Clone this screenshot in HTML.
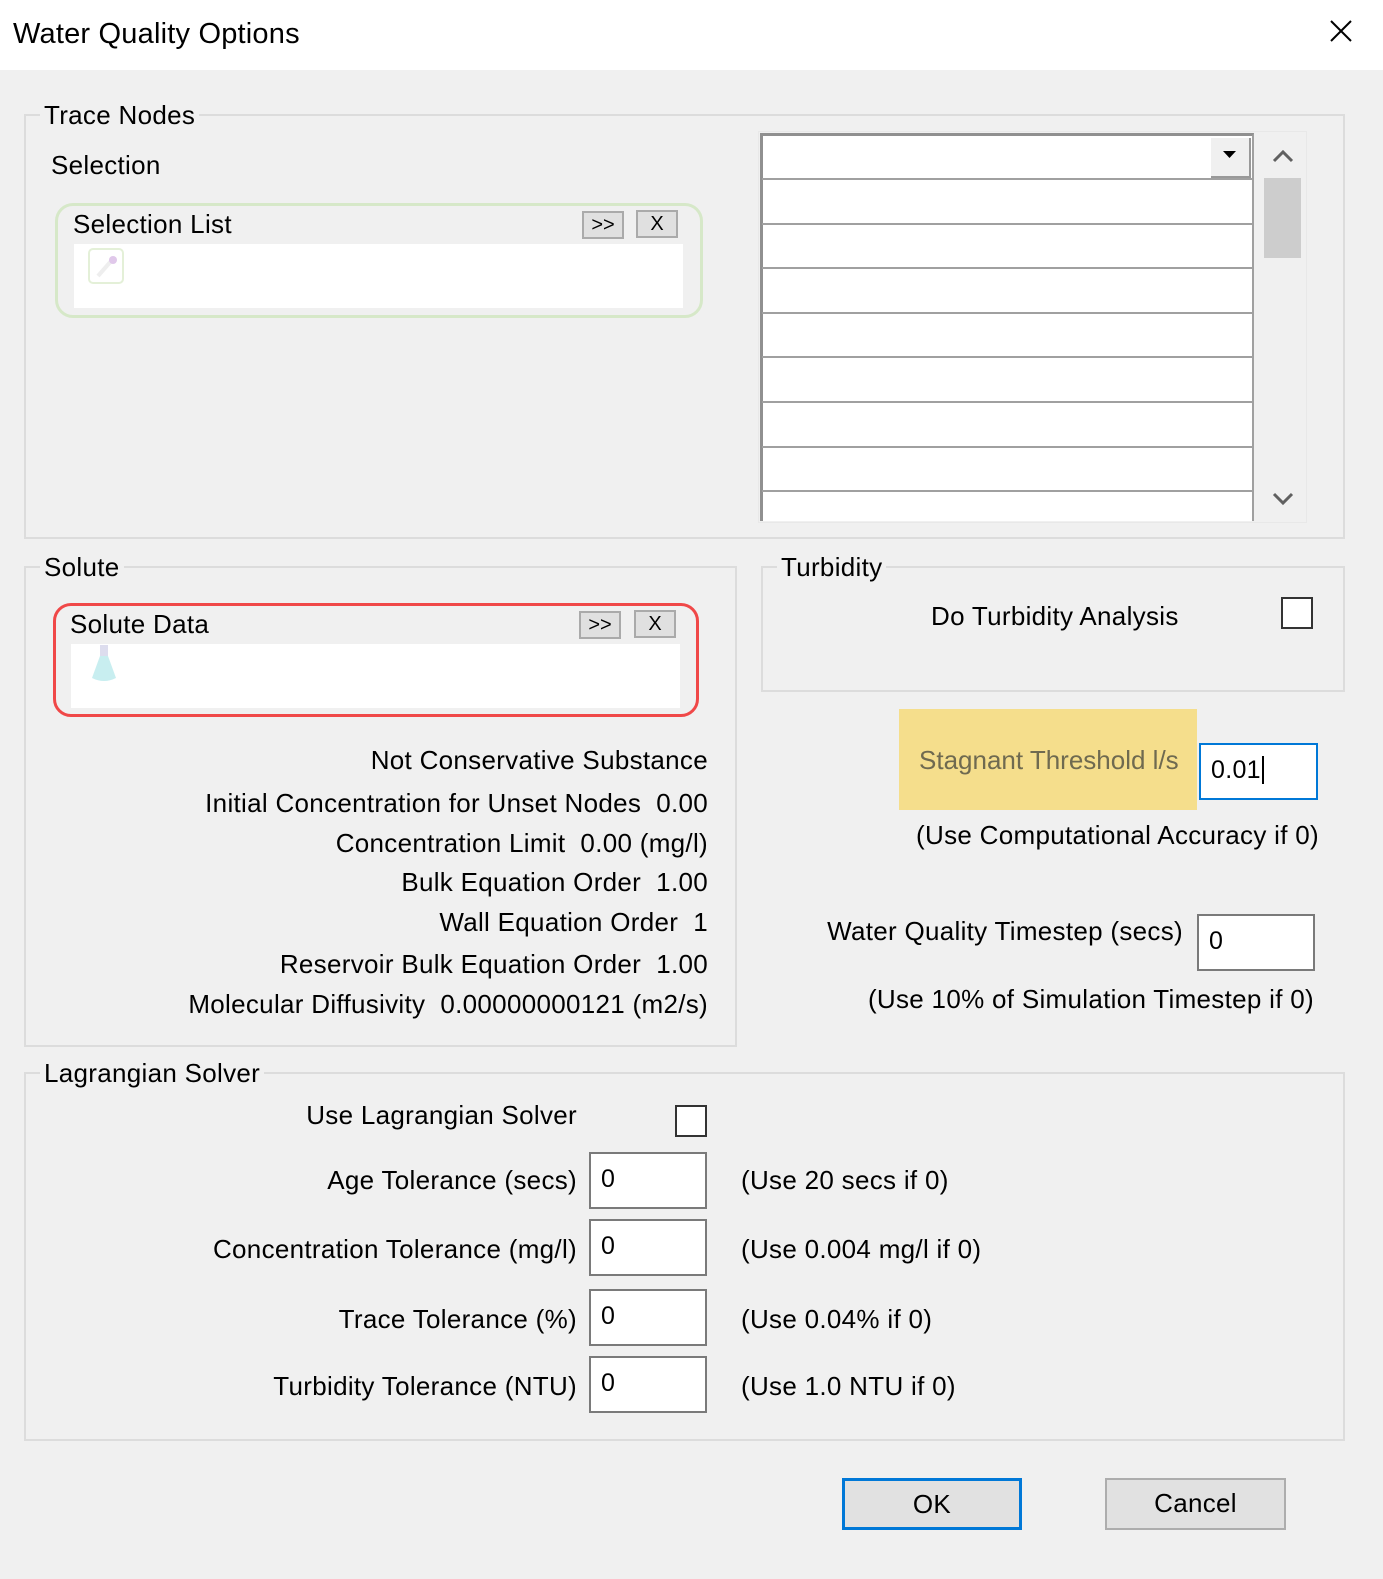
<!DOCTYPE html>
<html><head><meta charset="utf-8"><style>
*{box-sizing:border-box;margin:0;padding:0}
body{width:1383px;height:1579px;background:#f0f0f0;font-family:"Liberation Sans",sans-serif;font-size:26px;letter-spacing:0.3px;color:#000;position:relative;overflow:hidden}
.a{position:absolute;white-space:nowrap;line-height:30px;height:30px}
.r{text-align:right}
.g{position:absolute;border:2px solid #dcdcdc}
.gl{position:absolute;background:#f0f0f0;padding:0 4px;line-height:30px;font-size:26px}
.in{position:absolute;background:#fff;border:2px solid #7a7a7a;font-size:25px;padding-left:10px;line-height:50px}
.cb{position:absolute;width:32px;height:32px;background:#fff;border:2px solid #333}
.btn{position:absolute;background:#e1e1e1;border:2px solid #adadad;text-align:center;font-size:26px;line-height:46px}
.sb{position:absolute;width:42px;height:28px;background:#e0e0e0;border:2px solid #aaa;font-size:20px;line-height:24px;text-align:center;letter-spacing:0}
</style></head><body>
<div style="position:absolute;left:0;top:0;width:1383px;height:70px;background:#fff"></div>
<div class="a" style="left:13px;top:18px;font-size:29px;line-height:32px;height:32px;letter-spacing:0.2px">Water Quality Options</div>
<svg style="position:absolute;left:1329px;top:19px" width="24" height="24"><path d="M2 2L22 22M22 2L2 22" stroke="#000" stroke-width="2"/></svg>

<!-- Trace Nodes -->
<div class="g" style="left:24px;top:114px;width:1321px;height:425px"></div>
<div class="gl" style="left:40px;top:100px">Trace Nodes</div>
<div class="a" style="left:51px;top:150px">Selection</div>
<div style="position:absolute;left:55px;top:203px;width:648px;height:115px;border:3px solid #d6e8c8;border-radius:18px"></div>
<div class="a" style="left:73px;top:209px">Selection List</div>
<div class="sb" style="left:582px;top:211px">&gt;&gt;</div>
<div class="sb" style="left:636px;top:210px">X</div>
<div style="position:absolute;left:74px;top:244px;width:609px;height:64px;background:#fff"></div>
<div style="position:absolute;left:88px;top:248px;width:36px;height:36px;border:2px solid #e4f0d8;border-radius:5px"></div>
<svg style="position:absolute;left:90px;top:250px" width="32" height="32"><path d="M8 26L22 10" stroke="#eee" stroke-width="4"/><circle cx="23" cy="10" r="4" fill="#e0c8ea"/></svg>

<div style="position:absolute;left:758px;top:131px;width:549px;height:392px;background:#f0f0f0;border:1px solid #e8e8e8"></div>
<div style="position:absolute;left:760px;top:133px;width:494px;height:388px;background:#fff;border-left:3px solid #909090;border-top:3px solid #909090;border-right:2px solid #a0a0a0"></div>
<div style="position:absolute;left:1211px;top:138px;width:40px;height:40px;background:#f0f0f0;border-right:2px solid #999;border-bottom:2px solid #999"></div>
<svg style="position:absolute;left:1222px;top:150px" width="16" height="10"><path d="M1 1h13l-6.5 7z" fill="#000"/></svg>
<div style="position:absolute;left:762px;top:178px;width:490px;height:2px;background:#a0a0a0;box-shadow:0 45px #a0a0a0,0 89px #a0a0a0,0 134px #a0a0a0,0 178px #a0a0a0,0 223px #a0a0a0,0 268px #a0a0a0,0 312px #a0a0a0"></div>
<div style="position:absolute;left:1264px;top:178px;width:37px;height:80px;background:#cdcdcd"></div>
<svg style="position:absolute;left:1272px;top:148px" width="22" height="16"><path d="M2 13L11 4L20 13" stroke="#606060" stroke-width="3" fill="none"/></svg>
<svg style="position:absolute;left:1272px;top:491px" width="22" height="16"><path d="M2 3L11 12L20 3" stroke="#606060" stroke-width="3" fill="none"/></svg>

<!-- Solute -->
<div class="g" style="left:24px;top:566px;width:713px;height:481px"></div>
<div class="gl" style="left:40px;top:552px">Solute</div>
<div style="position:absolute;left:53px;top:603px;width:646px;height:114px;border:3px solid #f04848;border-radius:18px"></div>
<div class="a" style="left:70px;top:609px">Solute Data</div>
<div class="sb" style="left:579px;top:611px">&gt;&gt;</div>
<div class="sb" style="left:634px;top:610px">X</div>
<div style="position:absolute;left:71px;top:644px;width:609px;height:64px;background:#fff"></div>
<svg style="position:absolute;left:88px;top:644px" width="32" height="40"><rect x="12" y="1" width="8" height="12" fill="#dde"/><path d="M12 12L4 34Q16 40 28 34L20 12z" fill="#c8eef0"/></svg>

<div class="a r" style="right:675px;top:745px">Not Conservative Substance</div>
<div class="a r" style="right:675px;top:788px">Initial Concentration for Unset Nodes&nbsp; 0.00</div>
<div class="a r" style="right:675px;top:828px">Concentration Limit&nbsp; 0.00 (mg/l)</div>
<div class="a r" style="right:675px;top:867px">Bulk Equation Order&nbsp; 1.00</div>
<div class="a r" style="right:675px;top:907px">Wall Equation Order&nbsp; 1</div>
<div class="a r" style="right:675px;top:949px">Reservoir Bulk Equation Order&nbsp; 1.00</div>
<div class="a r" style="right:675px;top:989px">Molecular Diffusivity&nbsp; 0.00000000121 (m2/s)</div>

<!-- Turbidity -->
<div class="g" style="left:761px;top:566px;width:584px;height:126px"></div>
<div class="gl" style="left:777px;top:552px">Turbidity</div>
<div class="a" style="left:931px;top:601px">Do Turbidity Analysis</div>
<div class="cb" style="left:1281px;top:597px"></div>

<div style="position:absolute;left:899px;top:709px;width:298px;height:101px;background:#f5de8c"></div>
<div class="a" style="left:919px;top:745px;color:#6f6a50;letter-spacing:0">Stagnant Threshold l/s</div>
<div class="in" style="left:1199px;top:743px;width:119px;height:57px;border-color:#0078d7">0.01<span style="border-left:2px solid #000;margin-left:1px"></span></div>
<div class="a r" style="right:64px;top:820px">(Use Computational Accuracy if 0)</div>
<div class="a r" style="right:200px;top:916px">Water Quality Timestep (secs)</div>
<div class="in" style="left:1197px;top:914px;width:118px;height:57px">0</div>
<div class="a r" style="right:69px;top:984px">(Use 10% of Simulation Timestep if 0)</div>

<!-- Lagrangian -->
<div class="g" style="left:24px;top:1072px;width:1321px;height:369px"></div>
<div class="gl" style="left:40px;top:1058px">Lagrangian Solver</div>
<div class="a r" style="right:806px;top:1100px">Use Lagrangian Solver</div>
<div class="cb" style="left:675px;top:1105px"></div>
<div class="a r" style="right:806px;top:1165px">Age Tolerance (secs)</div>
<div class="in" style="left:589px;top:1152px;width:118px;height:57px">0</div>
<div class="a" style="left:741px;top:1165px">(Use 20 secs if 0)</div>
<div class="a r" style="right:806px;top:1234px">Concentration Tolerance (mg/l)</div>
<div class="in" style="left:589px;top:1219px;width:118px;height:57px">0</div>
<div class="a" style="left:741px;top:1234px">(Use 0.004 mg/l if 0)</div>
<div class="a r" style="right:806px;top:1304px">Trace Tolerance (%)</div>
<div class="in" style="left:589px;top:1289px;width:118px;height:57px">0</div>
<div class="a" style="left:741px;top:1304px">(Use 0.04% if 0)</div>
<div class="a r" style="right:806px;top:1371px">Turbidity Tolerance (NTU)</div>
<div class="in" style="left:589px;top:1356px;width:118px;height:57px">0</div>
<div class="a" style="left:741px;top:1371px">(Use 1.0 NTU if 0)</div>

<div class="btn" style="left:842px;top:1478px;width:180px;height:52px;border:3px solid #0078d7">OK</div>
<div class="btn" style="left:1105px;top:1478px;width:181px;height:52px">Cancel</div>
</body></html>
